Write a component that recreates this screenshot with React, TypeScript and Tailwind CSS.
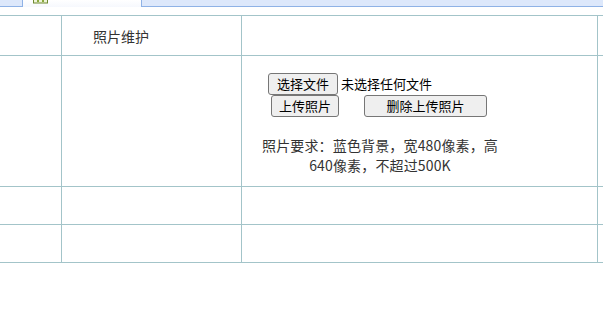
import React from "react";

const font = { fontFamily: '"Noto Sans CJK SC", "Noto Sans", sans-serif' };

function Btn({ children, className = "" }: { children: React.ReactNode; className?: string }) {
  return (
    <button
      className={
        "h-[22px] border border-[#767676] rounded-[3px] bg-[#efefef] text-[13px] leading-[20px] text-black px-[7px] flex items-center justify-center " +
        className
      }
      style={font}
    >
      {children}
    </button>
  );
}

export default function App() {
  return (
    <div className="w-[603px] h-[327px] bg-white overflow-hidden relative" style={font}>
      {/* tab strip */}
      <div className="flex h-[7px]">
        <div className="w-[23px] h-[7px] bg-[#dde8fb] border-r border-b border-[#8fb2e6]" />
        <div className="w-[118px] h-[7px] bg-gradient-to-b from-white to-[#f6f8fd] relative">
          <svg className="absolute left-[10px] top-0" width="15" height="4" viewBox="0 0 15 4">
            <rect x="0.5" y="-2" width="14" height="5" fill="#eef4d8" stroke="#6f8a2e" />
            <rect x="4" y="0" width="2" height="2" fill="#8aa83c" />
            <rect x="9" y="0" width="2" height="2" fill="#8aa83c" />
          </svg>
        </div>
        <div className="flex-1 h-[7px] bg-[#dde8fb] border-l border-b border-[#8fb2e6]" />
      </div>

      {/* table */}
      <div className="mt-[8px] border-t border-[#a3c4c9] w-[700px] text-[14px] text-[#333]">
        {/* row 1 */}
        <div className="flex h-[40px] border-b border-[#a3c4c9]">
          <div className="w-[62px] border-r border-[#a3c4c9]" />
          <div className="w-[180px] border-r border-[#a3c4c9] pl-[31px] flex items-center leading-[20px]">
            照片维护
          </div>
          <div className="w-[356px] border-r border-[#a3c4c9]" />
          <div className="flex-1" />
        </div>
        {/* row 2 */}
        <div className="flex h-[131px] border-b border-[#a3c4c9]">
          <div className="w-[62px] border-r border-[#a3c4c9]" />
          <div className="w-[180px] border-r border-[#a3c4c9]" />
          <div className="w-[356px] border-r border-[#a3c4c9] flex flex-col">
            <div className="flex items-center mt-[16px] ml-[26px] h-[23px]">
              <Btn className="w-[70px]">选择文件</Btn>
              <span className="ml-[3px] text-[13px] text-black leading-[20px]">未选择任何文件</span>
            </div>
            <div className="flex items-center ml-[29px] h-[22px]">
              <Btn className="w-[68px]">上传照片</Btn>
              <Btn className="w-[123px] ml-[25px]">删除上传照片</Btn>
            </div>
            <div className="mt-[18px] ml-[18px] w-[240px] text-center leading-[20px] whitespace-nowrap text-[#333] tracking-[0.15px]">
              照片要求：蓝色背景，宽480像素，高
              <br />
              640像素，不超过500K
            </div>
          </div>
          <div className="flex-1" />
        </div>
        {/* row 3 */}
        <div className="flex h-[38px] border-b border-[#a3c4c9]">
          <div className="w-[62px] border-r border-[#a3c4c9]" />
          <div className="w-[180px] border-r border-[#a3c4c9]" />
          <div className="w-[356px] border-r border-[#a3c4c9]" />
          <div className="flex-1" />
        </div>
        {/* row 4 */}
        <div className="flex h-[38px] border-b border-[#a3c4c9]">
          <div className="w-[62px] border-r border-[#a3c4c9]" />
          <div className="w-[180px] border-r border-[#a3c4c9]" />
          <div className="w-[356px] border-r border-[#a3c4c9]" />
          <div className="flex-1" />
        </div>
      </div>
    </div>
  );
}
